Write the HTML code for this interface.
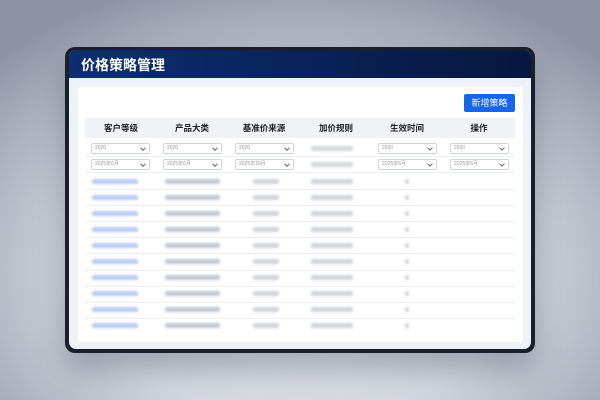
<!DOCTYPE html>
<html><head><meta charset="utf-8"><style>
*{margin:0;padding:0;box-sizing:border-box}
body{width:600px;height:400px;overflow:hidden;position:relative;font-family:"Liberation Sans","Noto Sans CJK SC",sans-serif;
background:radial-gradient(ellipse 420px 300px at 300px 270px,#eef0f4 0%,#d5d8e0 50%,#a6abb9 85%,#8f94a5 100%);}
.frame{position:absolute;left:65px;top:47px;width:470px;height:306px;background:#1b1f2c;border-radius:10px;box-shadow:0 18px 30px rgba(60,70,90,.35);}
.inner{position:absolute;left:69px;top:50px;width:462px;height:299px;background:#eef1f6;border-radius:7px;overflow:hidden}
.hdr{position:absolute;left:0;top:0;width:100%;height:28px;background:linear-gradient(90deg,#0c2f72,#0a2259 50%,#061740);}
.hdr span{position:absolute;left:12px;top:5px;color:#fff;font-size:14px;font-weight:bold}
.card{position:absolute;left:78px;top:87px;width:445px;height:255px;background:#fff;border-radius:3px}
.btn{position:absolute;left:464px;top:94px;width:51px;height:18px;background:#1566e8;color:#fff;font-size:9px;text-align:center;line-height:18px;border-radius:2px}
.th{position:absolute;left:85px;top:118px;width:430px;height:20px;background:#f0f2f5}
.th div{position:absolute;top:0;width:72px;text-align:center;font-size:8.5px;line-height:20px;color:#222;font-weight:bold}
.sel{position:absolute;width:59px;height:11px;border:1px solid #cfd3da;border-radius:2px;font-size:5px;color:#999;line-height:9px;padding-left:3px;background:#fff}
.sel:after{content:"";position:absolute;right:4px;top:2px;width:3px;height:3px;border-right:1px solid #666;border-bottom:1px solid #666;transform:rotate(45deg)}
.bar{position:absolute;height:5px;border-radius:2px;filter:blur(1.2px)}
.ln{position:absolute;left:85px;width:430px;height:1px;background:#eef0f3}
</style></head><body>
<div class="frame"></div>
<div class="inner"><div class="hdr"><span>价格策略管理</span></div></div>
<div class="card"></div>
<div class="btn">新增策略</div>
<div class="th">
<div style="left:0">客户等级</div><div style="left:71px">产品大类</div><div style="left:143px">基准价来源</div><div style="left:215px">加价规则</div><div style="left:286px">生效时间</div><div style="left:358px">操作</div>
</div>
<div class="sel" style="left:91px;top:143px">2020</div>
<div class="sel" style="left:163px;top:143px">2020</div>
<div class="sel" style="left:235px;top:143px">2020</div>
<div class="sel" style="left:378px;top:143px">2020</div>
<div class="sel" style="left:450px;top:143px">2020</div>
<div class="sel" style="left:91px;top:159px">2025年6月</div>
<div class="sel" style="left:163px;top:159px">2025年6月</div>
<div class="sel" style="left:235px;top:159px">2025年10月</div>
<div class="sel" style="left:378px;top:159px">2025年6月</div>
<div class="sel" style="left:450px;top:159px">2025年6月</div>
<div class="bar" style="left:311px;top:146px;width:42px;background:#d3d6db"></div>
<div class="bar" style="left:311px;top:162px;width:42px;background:#d3d6db"></div>
<div class="ln" style="top:156px"></div>
<div class="ln" style="top:172px"></div>
<div id="rows"></div>
<script>
var h='';for(var i=0;i<10;i++){var y=178.5+i*16.1;
h+='<div class="bar" style="left:92px;top:'+y+'px;width:46px;background:#b8cbf2"></div>';
h+='<div class="bar" style="left:165px;top:'+y+'px;width:55px;background:#c3c8d3"></div>';
h+='<div class="bar" style="left:253px;top:'+y+'px;width:26px;background:#d0d3d9"></div>';
h+='<div class="bar" style="left:311px;top:'+y+'px;width:42px;background:#d0d3d9"></div>';
h+='<div class="bar" style="left:405px;top:'+y+'px;width:4px;background:#d0d3d9"></div>';
if(i<9)h+='<div class="ln" style="top:'+(y+10.5)+'px"></div>';}
document.getElementById('rows').innerHTML=h;
</script>
</body></html>
